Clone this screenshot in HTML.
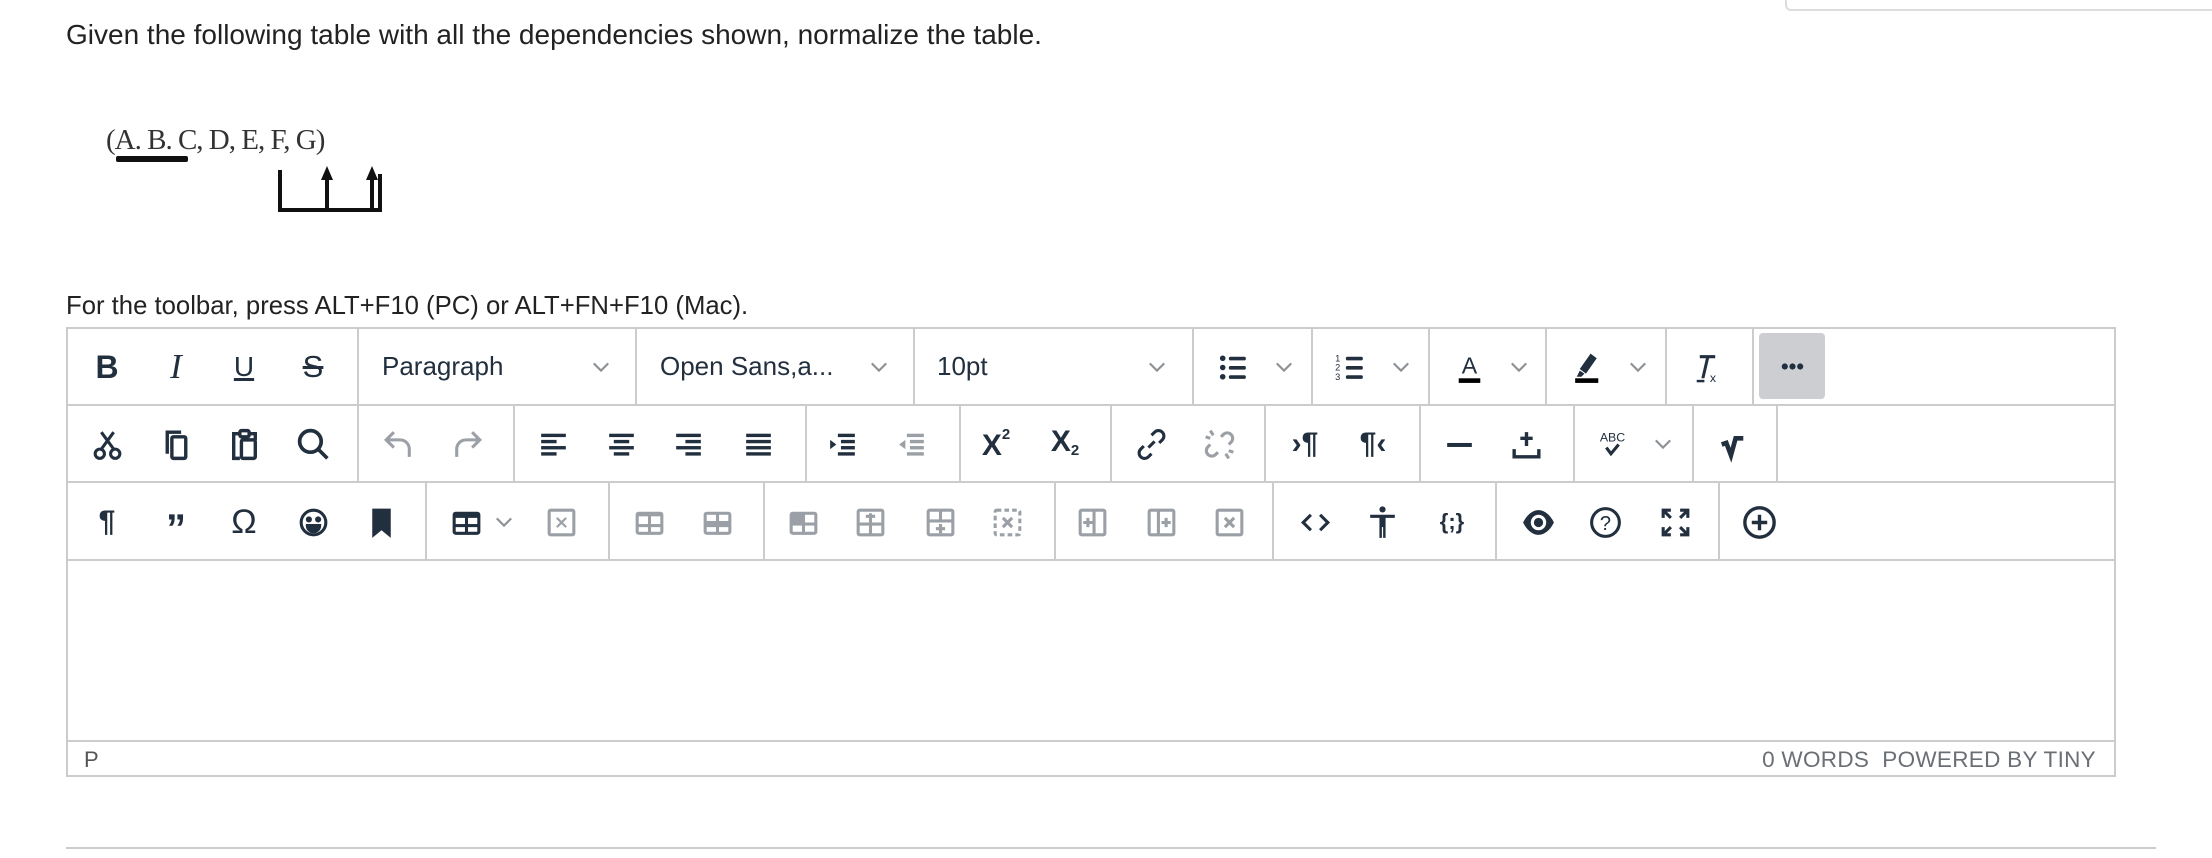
<!DOCTYPE html>
<html><head><meta charset="utf-8">
<style>
*{margin:0;padding:0;box-sizing:border-box}
body{width:2212px;height:858px;background:#fff;position:relative;overflow:hidden;font-family:"Liberation Sans",sans-serif;color:#222}
.a{position:absolute}
.t{font-size:25px;color:#222}
.vs{position:absolute;width:2px;background:#ccc}
.hs{position:absolute;height:2px;background:#ccc;left:66px;width:2050px}
.i{position:absolute;width:44px;height:44px;margin-left:-22px;margin-top:-22px;display:flex;align-items:center;justify-content:center;color:#222f3e}
.i svg{width:37px;height:37px}
.g{color:#9aa0a6}
.ch svg{width:18px;height:18px}
.ch{color:#8c9196}
</style></head><body>
<div class="a" style="left:1785px;top:-6px;width:440px;height:17px;border:2px solid #ddd;border-radius:6px"></div>
<div class="a t" style="left:66px;top:19px;font-size:28px">Given the following table with all the dependencies shown, normalize the table.</div>
<div class="a" style="left:106px;top:124px;font-family:'Liberation Serif',serif;font-size:29px;color:#333;letter-spacing:-1px">(A. B. C, D, E, F, G)</div>
<div class="a" style="left:116px;top:156px;width:72px;height:6px;background:#111;border-radius:2px"></div>
<svg class="a" style="left:270px;top:160px" width="120" height="56" viewBox="0 0 120 56">
<path d="M10 10V50H110V14M57 50V18M102 50V18" stroke="#111" stroke-width="4" fill="none"/>
<path d="M57 6L51 20H63Z M102 6L96 20H108Z" fill="#111"/>
</svg>
<div class="a t" style="left:66px;top:292px;font-size:25.7px">For the toolbar, press ALT+F10 (PC) or ALT+FN+F10 (Mac).</div>

<div class="a" style="left:66px;top:327px;width:2050px;height:450px;border:2px solid #ccc"></div>
<div class="hs" style="top:404px"></div>
<div class="hs" style="top:481px"></div>
<div class="hs" style="top:559px"></div>
<div class="hs" style="top:740px"></div>

<div class="vs" style="left:357px;top:327px;height:78px"></div>
<div class="vs" style="left:635px;top:327px;height:78px"></div>
<div class="vs" style="left:913px;top:327px;height:78px"></div>
<div class="vs" style="left:1192px;top:327px;height:78px"></div>
<div class="vs" style="left:1311px;top:327px;height:78px"></div>
<div class="vs" style="left:1428px;top:327px;height:78px"></div>
<div class="vs" style="left:1545px;top:327px;height:78px"></div>
<div class="vs" style="left:1665px;top:327px;height:78px"></div>
<div class="vs" style="left:1752px;top:327px;height:78px"></div>
<div class="vs" style="left:357px;top:405px;height:77px"></div>
<div class="vs" style="left:513px;top:405px;height:77px"></div>
<div class="vs" style="left:805px;top:405px;height:77px"></div>
<div class="vs" style="left:959px;top:405px;height:77px"></div>
<div class="vs" style="left:1110px;top:405px;height:77px"></div>
<div class="vs" style="left:1264px;top:405px;height:77px"></div>
<div class="vs" style="left:1419px;top:405px;height:77px"></div>
<div class="vs" style="left:1573px;top:405px;height:77px"></div>
<div class="vs" style="left:1692px;top:405px;height:77px"></div>
<div class="vs" style="left:1776px;top:405px;height:77px"></div>
<div class="vs" style="left:425px;top:482px;height:78px"></div>
<div class="vs" style="left:608px;top:482px;height:78px"></div>
<div class="vs" style="left:763px;top:482px;height:78px"></div>
<div class="vs" style="left:1054px;top:482px;height:78px"></div>
<div class="vs" style="left:1272px;top:482px;height:78px"></div>
<div class="vs" style="left:1495px;top:482px;height:78px"></div>
<div class="vs" style="left:1718px;top:482px;height:78px"></div>

<div class="i" style="left:107px;top:367px;font-size:32px;font-weight:bold">B</div>
<div class="i" style="left:176px;top:367px;font-size:35px;font-style:italic;font-family:'Liberation Serif',serif">I</div>
<div class="i" style="left:244px;top:367px;font-size:28px;text-decoration:underline;text-decoration-thickness:3px">U</div>
<div class="i" style="left:313px;top:367px;font-size:31px;text-decoration:line-through;text-decoration-thickness:3px">S</div>
<div class="a t" style="left:382px;top:351px;color:#222f3e;font-size:26px">Paragraph</div>
<div class="a t" style="left:660px;top:351px;color:#222f3e;font-size:26px">Open Sans,a...</div>
<div class="a t" style="left:937px;top:351px;color:#222f3e;font-size:26px">10pt</div>
<div class="i ch" style="left:601px;top:367px"><svg viewBox="0 0 10 10"><path d="M1 3l4 4 4-4" stroke="currentColor" stroke-width="1.2" fill="none"/></svg></div>
<div class="i ch" style="left:879px;top:367px"><svg viewBox="0 0 10 10"><path d="M1 3l4 4 4-4" stroke="currentColor" stroke-width="1.2" fill="none"/></svg></div>
<div class="i ch" style="left:1157px;top:367px"><svg viewBox="0 0 10 10"><path d="M1 3l4 4 4-4" stroke="currentColor" stroke-width="1.2" fill="none"/></svg></div>
<div class="i" style="left:1233px;top:367px"><svg viewBox="0 0 24 24" fill="currentColor"><circle cx="5" cy="6" r="1.8"/><circle cx="5" cy="12" r="1.8"/><circle cx="5" cy="18" r="1.8"/><rect x="9" y="5" width="11" height="2.4" rx="1"/><rect x="9" y="11" width="11" height="2.4" rx="1"/><rect x="9" y="17" width="11" height="2.4" rx="1"/></svg></div>
<div class="i ch" style="left:1284px;top:367px"><svg viewBox="0 0 10 10"><path d="M1 3l4 4 4-4" stroke="currentColor" stroke-width="1.2" fill="none"/></svg></div>
<div class="i" style="left:1350px;top:367px"><svg viewBox="0 0 24 24" fill="currentColor"><text x="2" y="8" font-size="6" font-family="Liberation Sans">1</text><text x="2" y="14" font-size="6" font-family="Liberation Sans">2</text><text x="2" y="20" font-size="6" font-family="Liberation Sans">3</text><rect x="9" y="5" width="11" height="2.4" rx="1"/><rect x="9" y="11" width="11" height="2.4" rx="1"/><rect x="9" y="17" width="11" height="2.4" rx="1"/></svg></div>
<div class="i ch" style="left:1401px;top:367px"><svg viewBox="0 0 10 10"><path d="M1 3l4 4 4-4" stroke="currentColor" stroke-width="1.2" fill="none"/></svg></div>
<div class="i" style="left:1469px;top:367px"><svg viewBox="0 0 24 24"><text x="12" y="16" text-anchor="middle" font-size="15" font-family="Liberation Sans" fill="#222f3e">A</text><rect x="5" y="19" width="14" height="3" fill="#000"/></svg></div>
<div class="i ch" style="left:1519px;top:367px"><svg viewBox="0 0 10 10"><path d="M1 3l4 4 4-4" stroke="currentColor" stroke-width="1.2" fill="none"/></svg></div>
<div class="i" style="left:1587px;top:367px"><svg viewBox="0 0 24 24"><path d="M14 3l4 3-7 10-4-3z M7 14l3 2-2 2H5z" fill="#222f3e"/><rect x="4" y="19" width="15" height="3" fill="#000"/></svg></div>
<div class="i ch" style="left:1638px;top:367px"><svg viewBox="0 0 10 10"><path d="M1 3l4 4 4-4" stroke="currentColor" stroke-width="1.2" fill="none"/></svg></div>
<div class="i" style="left:1707px;top:367px"><svg viewBox="0 0 24 24" fill="#222f3e"><path d="M7 4h10v2h-4l-3 13H8l3-13H7z"/><rect x="5" y="20" width="5" height="1.6"/><text x="13.5" y="21.5" font-size="8" font-family="Liberation Sans">x</text></svg></div>
<div class="a" style="left:1759px;top:333px;width:66px;height:66px;background:#ccced2;border-radius:4px"></div>
<div class="i" style="left:1792px;top:366px"><svg viewBox="0 0 24 24" fill="#222f3e"><circle cx="7" cy="12" r="2"/><circle cx="12" cy="12" r="2"/><circle cx="17" cy="12" r="2"/></svg></div>

<div class="i" style="left:107px;top:444px"><svg viewBox="0 0 24 24" fill="none" stroke="#222f3e" stroke-width="2"><path d="M8 4l8 11M16 4L8 15"/><circle cx="7" cy="18" r="3"/><circle cx="17" cy="18" r="3"/></svg></div>
<div class="i" style="left:176px;top:444px"><svg viewBox="0 0 24 24" fill="none" stroke="#222f3e" stroke-width="2.2"><path d="M6 18V4h9"/><rect x="9" y="7" width="9" height="14" rx="1"/></svg></div>
<div class="i" style="left:244px;top:444px"><svg viewBox="0 0 24 24" fill="none" stroke="#222f3e" stroke-width="2.2"><path d="M9 5H5v16h4"/><rect x="9" y="3" width="6" height="4" rx="1"/><rect x="10" y="9" width="9" height="12" rx="1"/><path d="M15 5h4v4"/></svg></div>
<div class="i" style="left:313px;top:444px"><svg viewBox="0 0 24 24" fill="none" stroke="#222f3e" stroke-width="2.4"><circle cx="10" cy="10" r="7"/><path d="M15 15l6 6"/></svg></div>
<div class="i g" style="left:398px;top:444px"><svg viewBox="0 0 24 24" fill="none" stroke="currentColor" stroke-width="2"><path d="M9 4L4 9l5 5M4 9h9a6 6 0 0 1 6 6v5"/></svg></div>
<div class="i g" style="left:467px;top:444px"><svg viewBox="0 0 24 24" fill="none" stroke="currentColor" stroke-width="2"><path d="M15 4l5 5-5 5M20 9h-9a6 6 0 0 0-6 6v5"/></svg></div>
<div class="i" style="left:553px;top:444px"><svg viewBox="0 0 24 24" fill="#222f3e"><rect x="4" y="5" width="16" height="2.2"/><rect x="4" y="9" width="10" height="2.2"/><rect x="4" y="13" width="16" height="2.2"/><rect x="4" y="17" width="10" height="2.2"/></svg></div>
<div class="i" style="left:621px;top:444px"><svg viewBox="0 0 24 24" fill="#222f3e"><rect x="4" y="5" width="16" height="2.2"/><rect x="7" y="9" width="10" height="2.2"/><rect x="4" y="13" width="16" height="2.2"/><rect x="7" y="17" width="10" height="2.2"/></svg></div>
<div class="i" style="left:688px;top:444px"><svg viewBox="0 0 24 24" fill="#222f3e"><rect x="4" y="5" width="16" height="2.2"/><rect x="10" y="9" width="10" height="2.2"/><rect x="4" y="13" width="16" height="2.2"/><rect x="10" y="17" width="10" height="2.2"/></svg></div>
<div class="i" style="left:758px;top:444px"><svg viewBox="0 0 24 24" fill="#222f3e"><rect x="4" y="5" width="16" height="2.2"/><rect x="4" y="9" width="16" height="2.2"/><rect x="4" y="13" width="16" height="2.2"/><rect x="4" y="17" width="16" height="2.2"/></svg></div>
<div class="i" style="left:842px;top:444px"><svg viewBox="0 0 24 24" fill="#222f3e"><rect x="9" y="5" width="11" height="2.2"/><rect x="11" y="9" width="9" height="2.2"/><rect x="11" y="13" width="9" height="2.2"/><rect x="9" y="17" width="11" height="2.2"/><path d="M4 9l4 3-4 3z"/></svg></div>
<div class="i g" style="left:911px;top:444px"><svg viewBox="0 0 24 24" fill="currentColor"><rect x="9" y="5" width="11" height="2.2"/><rect x="11" y="9" width="9" height="2.2"/><rect x="11" y="13" width="9" height="2.2"/><rect x="9" y="17" width="11" height="2.2"/><path d="M8 9l-4 3 4 3z"/></svg></div>
<div class="i" style="left:996px;top:446px;font-size:30px;font-weight:bold">X<span style="font-size:15px;position:relative;top:-12px">2</span></div>
<div class="i" style="left:1065px;top:442px;font-size:30px;font-weight:bold">X<span style="font-size:15px;position:relative;top:8px">2</span></div>
<div class="i" style="left:1151px;top:444px"><svg viewBox="0 0 24 24" fill="none" stroke="#222f3e" stroke-width="2"><path d="M10 14l4-4M12 6l2-2a3.5 3.5 0 0 1 5 5l-2 2M12 18l-2 2a3.5 3.5 0 0 1-5-5l2-2"/></svg></div>
<div class="i g" style="left:1219px;top:444px"><svg viewBox="0 0 24 24" fill="none" stroke="currentColor" stroke-width="2"><path d="M13 7l1.5-1.5a3.5 3.5 0 0 1 5 5L18 12M11 17l-1.5 1.5a3.5 3.5 0 0 1-5-5L6 12M6 3l2 3M3 7l3 1M18 21l-2-3M21 17l-3-1"/></svg></div>
<div class="i" style="left:1305px;top:444px;font-size:30px;font-weight:bold">›¶</div>
<div class="i" style="left:1373px;top:444px;font-size:30px;font-weight:bold">¶‹</div>
<div class="i" style="left:1459px;top:444px"><svg viewBox="0 0 24 24"><rect x="4" y="11" width="16" height="2.6" fill="#222f3e"/></svg></div>
<div class="i" style="left:1526px;top:444px"><svg viewBox="0 0 24 24" fill="none" stroke="#222f3e" stroke-width="2.2"><path d="M12 4v9M8 8h8M4 15v5h16v-5"/></svg></div>
<div class="i" style="left:1612px;top:444px"><svg viewBox="0 0 24 24"><text x="12" y="10" text-anchor="middle" font-size="8" font-family="Liberation Sans" fill="#222f3e">ABC</text><path d="M8 14l3 4 5-6" stroke="#222f3e" stroke-width="2" fill="none"/></svg></div>
<div class="i ch" style="left:1663px;top:444px"><svg viewBox="0 0 10 10"><path d="M1 3l4 4 4-4" stroke="currentColor" stroke-width="1.2" fill="none"/></svg></div>
<div class="i" style="left:1732px;top:444px"><svg viewBox="0 0 24 24"><path d="M5 12l3-1 3 8 3-11h5" stroke="#222f3e" stroke-width="3" fill="none"/></svg></div>

<div class="i" style="left:107px;top:522px;font-size:30px;font-weight:bold">¶</div>
<div class="i" style="left:176px;top:522px;font-size:40px;font-weight:bold;padding-top:14px">”</div>
<div class="i" style="left:244px;top:522px;font-size:34px">Ω</div>
<div class="i" style="left:313px;top:522px"><svg viewBox="0 0 24 24" fill="none" stroke="#222f3e" stroke-width="2"><circle cx="12" cy="12" r="8"/><circle cx="9" cy="10" r="1" fill="#222f3e"/><circle cx="15" cy="10" r="1" fill="#222f3e"/><path d="M8 14h8a4 4 0 0 1-8 0z" fill="#222f3e"/></svg></div>
<div class="i" style="left:381px;top:522px"><svg viewBox="0 0 24 24"><path d="M6 3h12v19l-6-5-6 5z" fill="#222f3e"/></svg></div>
<div class="i" style="left:466px;top:522px"><svg viewBox="0 0 24 24"><rect x="3" y="5" width="18" height="15" rx="2" fill="#222f3e"/><rect x="5" y="9" width="6" height="4" fill="#fff"/><rect x="13" y="9" width="6" height="4" fill="#fff"/><rect x="5" y="15" width="6" height="3" fill="#fff"/><rect x="13" y="15" width="6" height="3" fill="#fff"/></svg></div>
<div class="i ch" style="left:504px;top:522px"><svg viewBox="0 0 10 10"><path d="M1 3l4 4 4-4" stroke="currentColor" stroke-width="1.2" fill="none"/></svg></div>
<div class="i g" style="left:561px;top:522px"><svg viewBox="0 0 24 24" fill="none" stroke="currentColor" stroke-width="2"><rect x="4" y="4" width="16" height="16" rx="1"/><path d="M9 9l6 6M15 9l-6 6" stroke-width="1.4"/></svg></div>
<div class="i g" style="left:649px;top:522px"><svg viewBox="0 0 24 24"><rect x="3" y="5" width="18" height="15" rx="2" fill="currentColor"/><rect x="5" y="8" width="6" height="5" fill="#fff"/><rect x="13" y="8" width="6" height="5" fill="#fff"/><rect x="5" y="15" width="6" height="3" fill="#fff"/><rect x="13" y="15" width="6" height="3" fill="#fff"/></svg></div>
<div class="i g" style="left:717px;top:522px"><svg viewBox="0 0 24 24"><rect x="3" y="5" width="18" height="15" rx="2" fill="currentColor"/><rect x="5" y="7" width="6" height="4" fill="#fff"/><rect x="13" y="7" width="6" height="4" fill="#fff"/><rect x="5" y="15" width="6" height="3" fill="#fff"/><rect x="13" y="15" width="6" height="3" fill="#fff"/></svg></div>
<div class="i g" style="left:803px;top:522px"><svg viewBox="0 0 24 24"><rect x="3" y="5" width="18" height="15" rx="2" fill="currentColor"/><rect x="13" y="7" width="6" height="5" fill="#fff"/><rect x="5" y="14" width="6" height="4" fill="#fff"/><rect x="13" y="14" width="6" height="4" fill="#fff"/></svg></div>
<div class="i g" style="left:870px;top:522px"><svg viewBox="0 0 24 24" fill="none" stroke="currentColor" stroke-width="2"><rect x="4" y="4" width="16" height="16" rx="1"/><path d="M4 13h16M12 13v7M12 6v6M9 8h6"/></svg></div>
<div class="i g" style="left:940px;top:522px"><svg viewBox="0 0 24 24" fill="none" stroke="currentColor" stroke-width="2"><rect x="4" y="4" width="16" height="16" rx="1"/><path d="M4 11h16M12 4v7M12 13v6M9 16h6"/></svg></div>
<div class="i g" style="left:1007px;top:522px"><svg viewBox="0 0 24 24" fill="none" stroke="currentColor" stroke-width="2"><rect x="4" y="4" width="16" height="16" rx="1" stroke-dasharray="3 2"/><path d="M9 9l6 6M15 9l-6 6"/></svg></div>
<div class="i g" style="left:1092px;top:522px"><svg viewBox="0 0 24 24" fill="none" stroke="currentColor" stroke-width="2"><rect x="4" y="4" width="16" height="16" rx="1"/><path d="M13 4v16M6 12h6M9 9v6"/></svg></div>
<div class="i g" style="left:1161px;top:522px"><svg viewBox="0 0 24 24" fill="none" stroke="currentColor" stroke-width="2"><rect x="4" y="4" width="16" height="16" rx="1"/><path d="M10 4v16M12 12h6M15 9v6"/></svg></div>
<div class="i g" style="left:1229px;top:522px"><svg viewBox="0 0 24 24" fill="none" stroke="currentColor" stroke-width="2"><rect x="4" y="4" width="16" height="16" rx="1"/><path d="M9 9l6 6M15 9l-6 6"/></svg></div>
<div class="i" style="left:1315px;top:522px"><svg viewBox="0 0 24 24" fill="none" stroke="#222f3e" stroke-width="2"><path d="M9 7l-5 5 5 5M15 7l5 5-5 5"/></svg></div>
<div class="i" style="left:1382px;top:522px"><svg viewBox="0 0 24 24" fill="#222f3e"><circle cx="12" cy="3.5" r="2"/><path d="M4 7h16v2h-6v13h-1.6v-7h-0.8v7H10V9H4z"/></svg></div>
<div class="i" style="left:1452px;top:522px;font-size:22px;font-weight:bold">{;}</div>
<div class="i" style="left:1538px;top:522px"><svg viewBox="0 0 24 24"><path d="M2 12c3-6 7-8 10-8s7 2 10 8c-3 6-7 8-10 8s-7-2-10-8z" fill="#222f3e"/><circle cx="12" cy="12" r="5" fill="#fff"/><circle cx="12" cy="12" r="3" fill="#222f3e"/></svg></div>
<div class="i" style="left:1605px;top:522px"><svg viewBox="0 0 24 24" fill="none" stroke="#222f3e" stroke-width="2"><circle cx="12" cy="12" r="9"/><text x="12" y="17" text-anchor="middle" font-size="13" font-family="Liberation Sans" fill="#222f3e" stroke="none">?</text></svg></div>
<div class="i" style="left:1675px;top:522px"><svg viewBox="0 0 24 24" fill="none" stroke="#222f3e" stroke-width="2"><path d="M4 9V4h5M4 4l5 5M20 9V4h-5M20 4l-5 5M4 15v5h5M4 20l5-5M20 15v5h-5M20 20l-5-5"/></svg></div>
<div class="i" style="left:1759px;top:522px"><svg viewBox="0 0 24 24" fill="none" stroke="#222f3e" stroke-width="2.2"><circle cx="12" cy="12" r="9.5"/><path d="M12 7v10M7 12h10"/></svg></div>

<div class="a" style="left:84px;top:747px;font-size:22px;color:#555">P</div>
<div class="a" style="left:1666px;top:747px;font-size:22.5px;color:#6a6f75;letter-spacing:0.3px;width:430px;text-align:right">0 WORDS&nbsp;&nbsp;POWERED BY TINY</div>

<div class="a" style="left:66px;top:847px;width:2090px;height:2px;background:#ccc"></div>
</body></html>
